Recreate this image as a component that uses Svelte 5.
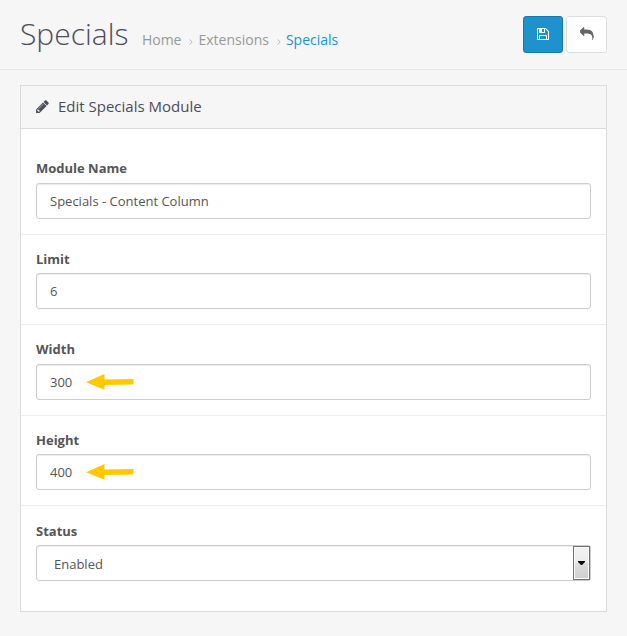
<script>
  const crumbs = ['Home', 'Extensions', 'Specials'];
  const fields = [
    { label: 'Module Name', value: 'Specials - Content Column' },
    { label: 'Limit', value: '6' },
    { label: 'Width', value: '300', arrow: true },
    { label: 'Height', value: '400', arrow: true },
    { label: 'Status', value: 'Enabled', select: true }
  ];
</script>

<main>
  <header>
    <h1>Specials</h1>
    <nav>
      {#each crumbs as crumb, i}
        {#if i > 0}
          <svg class="sep" width="4" height="6" viewBox="0 0 4 6"><path d="M.5 .4L3.2 3L.5 5.6" fill="none" stroke="#bbb" stroke-width="1" /></svg>
        {/if}
        <span class:current={i === crumbs.length - 1}>{crumb}</span>
      {/each}
    </nav>
    <div class="actions">
      <button class="primary" aria-label="Save">
        <svg width="14" height="14" viewBox="0 0 1792 1792"><path fill="currentColor" d="M512 1536h768v-384h-768v384zm896 0h128v-896q0-14-10-38.5t-20-34.5l-281-281q-10-10-34-20t-39-10v416q0 40-28 68t-68 28h-576q-40 0-68-28t-28-68v-416h-128v1280h128v-416q0-40 28-68t68-28h832q40 0 68 28t28 68v416zm-384-928v-320q0-13-9.5-22.5t-22.5-9.5h-192q-13 0-22.5 9.5t-9.5 22.5v320q0 13 9.5 22.5t22.5 9.5h192q13 0 22.5-9.5t9.5-22.5zm640 32v928q0 40-28 68t-68 28h-1344q-40 0-68-28t-28-68v-1344q0-40 28-68t68-28h928q40 0 88 20t76 48l280 280q28 28 48 76t20 88z" /></svg>
      </button>
      <button aria-label="Cancel">
        <svg width="14" height="14" viewBox="0 0 1792 1792"><path fill="currentColor" d="M1792 1120q0 166-127 451-3 7-10.500 24t-13.500 30-13 22q-12 17-28 17-15 0-23.500-10t-8.500-25q0-9 2.500-26.500t2.500-23.500q5-68 5-123 0-112-19.500-200.500t-54-153.500-89-112-117-79-155-48.500-177-25.500-197.500-7h-224v256q0 26-19 45t-45 19-45-19l-512-512q-19-19-19-45t19-45l512-512q19-19 45-19t45 19 19 45v256h224q713 0 875 403 53 134 53 333z" /></svg>
      </button>
    </div>
  </header>

  <section class="panel">
    <div class="heading">
      <svg width="15" height="15" viewBox="0 0 1792 1792"><path fill="currentColor" d="M491 1536l91-91-235-235-91 91v107h128v128h107zm523-928q0-22-22-22-10 0-17 7l-542 542q-7 7-7 17 0 22 22 22 10 0 17-7l542-542q7-7 7-17zm-54-192l416 416-832 832h-416v-416zm683 96q0 53-37 90l-166 166-416-416 166-165q36-38 90-38 53 0 91 38l235 234q37 39 37 91z" /></svg>
      <h2>Edit Specials Module</h2>
    </div>
    <form>
      {#each fields as field}
        <div class="group">
          <div class="label">{field.label}</div>
          <div class="control" class:select={field.select}>
            <span>{field.value}</span>
            {#if field.arrow}
              <svg class="arrow" width="48" height="16" viewBox="0 0 48 16"><path fill="#ffc800" d="M0 8.300L18.500 0V5.500L47.500 5V10.500L18.500 11V15.800Z" /></svg>
            {/if}
            {#if field.select}
              <div class="drop"><svg width="7" height="4" viewBox="0 0 7 4"><path d="M0 0H7V1L4 4H3L0 1Z" /></svg></div>
            {/if}
          </div>
        </div>
      {/each}
    </form>
  </section>
</main>

<style>
  :global(body) {
    background: #f6f6f6;
  }
  main {
    box-sizing: border-box;
    height: 636px;
    overflow: hidden;
    font: 13px/20px 'Open Sans', sans-serif;
    color: #555;
  }
  header {
    box-sizing: border-box;
    height: 70px;
    padding: 0 20px;
    border-bottom: 1px solid #e7e7e7;
    display: flex;
    align-items: flex-start;
  }
  h1 {
    margin: 16px 0 0;
    font-size: 30px;
    line-height: 36px;
    font-weight: 300;
    color: #4c4d5a;
  }
  nav {
    margin: 30px 0 0 13.5px;
    display: flex;
    font-size: 14px;
    line-height: 20px;
    color: #999;
  }
  nav .current {
    color: #1e91cf;
  }
  .sep {
    margin: 9px 5px 0 8px;
  }
  .actions {
    margin: 16px 0 0 auto;
    display: flex;
    gap: 3px;
  }
  button {
    box-sizing: border-box;
    width: 41px;
    height: 37px;
    padding: 0 0 1px;
    display: flex;
    align-items: center;
    justify-content: center;
    border: 1px solid #ddd;
    border-radius: 3px;
    background: #fff;
    color: #666;
  }
  button.primary {
    width: 40px;
    background: #1e91cf;
    border-color: #1978ab;
    color: #fff;
  }
  .panel {
    box-sizing: border-box;
    height: 527px;
    margin: 15px 20px 0;
    border: 1px solid #dcdcdc;
    background: #fff;
  }
  .heading {
    box-sizing: border-box;
    height: 43px;
    padding: 0 0 2px 14px;
    display: flex;
    align-items: center;
    border-bottom: 1px solid #dcdcdc;
    background: #f6f6f6;
    color: #4c4d5a;
  }
  h2 {
    margin: 0 0 0 8px;
    font-size: 15px;
    font-weight: 400;
  }
  form {
    padding-top: 14px;
  }
  .group {
    box-sizing: border-box;
    height: 90px;
    padding: 14px 15px 0;
  }
  .group:nth-child(odd) {
    height: 91px;
  }
  .group:first-child,
  .group:last-child {
    padding-top: 15px;
  }
  .group + .group {
    border-top: 1px solid #ededed;
  }
  .label {
    height: 24px;
    font-weight: 700;
  }
  .group:first-child .label,
  .group:nth-child(3) .label {
    height: 25px;
  }
  .control {
    box-sizing: border-box;
    height: 36px;
    padding-left: 13px;
    display: flex;
    align-items: center;
    border: 1px solid #ccc;
    border-radius: 3px;
    box-shadow: inset 0 1px 1px rgba(0, 0, 0, 0.075);
  }
  .arrow {
    margin-left: 13.5px;
  }
  .select {
    padding-left: 17px;
  }
  .select span {
    padding-top: 2px;
  }
  .drop {
    box-sizing: border-box;
    width: 17px;
    height: 34px;
    margin-left: auto;
    display: flex;
    align-items: center;
    justify-content: center;
    border: 1px solid #707070;
    box-shadow: inset 0 0 0 1px #fafafa;
    background: linear-gradient(#f2f2f2 0, #ebebeb 50%, #dddddd 50%, #cfcfcf 100%);
  }
</style>
